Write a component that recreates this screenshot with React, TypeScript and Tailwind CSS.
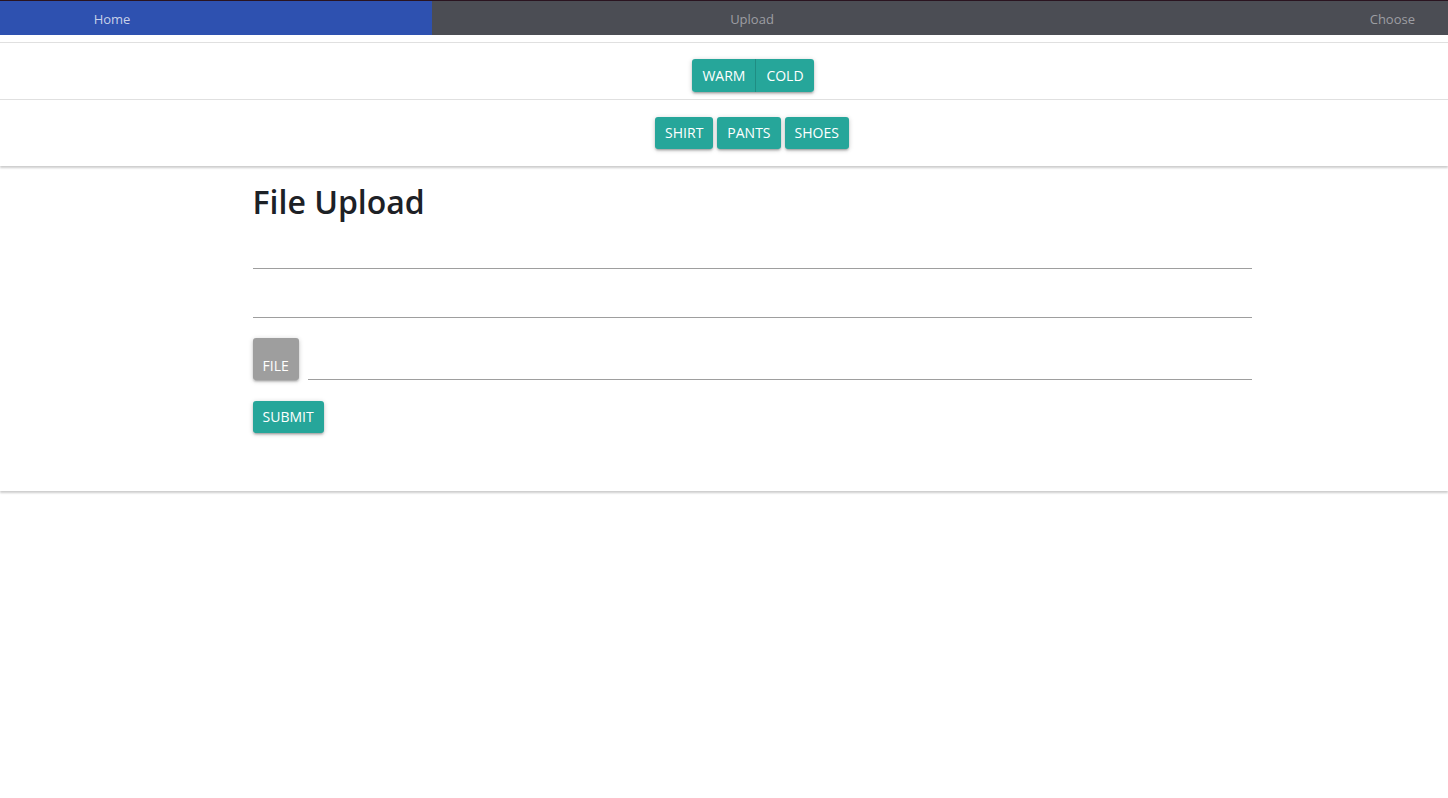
import { FC } from "react";

const tealBtn =
  "rounded-[3px] bg-[#26a69a] px-[10px] text-[14px] leading-[32px] text-white shadow-[0_2px_2px_0_rgba(0,0,0,0.14),0_3px_1px_-2px_rgba(0,0,0,0.12),0_1px_5px_0_rgba(0,0,0,0.2)]";

const UnderlineInput: FC<{ className?: string }> = ({ className }) => (
  <div className={`h-[46px] border-b border-[#9e9e9e] ${className ?? ""}`} />
);

const App: FC = () => {
  return (
    <div className="min-h-[798px] bg-white font-['Open_Sans','Noto_Sans',sans-serif] text-[#212121]">
      {/* nav */}
      <nav className="flex h-[35px] border-t border-[#2a1420] pt-[3px] text-[13px] text-[#c9c9cc]">
        <div className="-mt-[3px] flex w-[432px] items-center bg-[#2e51b0] pt-[3px]">
          <span className="w-[224px] text-center text-[#c8d0e8]">Home</span>
        </div>
        <div className="-mt-[3px] flex w-[640px] items-center justify-center bg-[#4b4d54] pt-[3px] text-[#9d9ea3]">
          Upload
        </div>
        <div className="-mt-[3px] flex flex-1 items-center justify-end bg-[#4b4d54] pt-[3px] pr-[33px] text-[#9d9ea3]">
          Choose
        </div>
      </nav>

      <div className="mt-[7px] border-t border-[#e0e0e0]" />

      {/* season toggle */}
      <div className="flex justify-center pt-[16px] pb-[7px] pl-[58px]">
        <div className="flex overflow-hidden rounded-[3px] shadow-[0_2px_2px_0_rgba(0,0,0,0.14),0_3px_1px_-2px_rgba(0,0,0,0.12),0_1px_5px_0_rgba(0,0,0,0.2)]">
          <button className="bg-[#26a69a] px-[10px] text-[14px] leading-[33px] text-white">
            WARM
          </button>
          <button className="border-l border-[#1f8d83] bg-[#26a69a] px-[10px] text-[14px] leading-[33px] text-white">
            COLD
          </button>
        </div>
      </div>

      <div className="border-t border-[#e0e0e0]" />

      {/* category */}
      <div className="flex justify-center gap-[4px] pt-[17px] pb-[17px] pl-[56px] shadow-[0_2px_2px_rgba(0,0,0,0.2)]">
        <button className={tealBtn}>SHIRT</button>
        <button className={tealBtn}>PANTS</button>
        <button className={tealBtn}>SHOES</button>
      </div>

      {/* upload form */}
      <div className="pb-[58px] pl-[56px] shadow-[0_2px_2px_rgba(0,0,0,0.2)]">
        <div className="mx-auto w-[999px] pt-[14px]">
          <h1 className="text-[32px] font-semibold leading-[44px] text-[#1d2126]">
            File Upload
          </h1>
          <UnderlineInput className="-mt-[1px]" />
          <UnderlineInput className="mt-[3px]" />
          <div className="mt-[20px] flex items-end gap-[9px]">
            <button className="h-[42px] rounded-[3px] bg-[#9e9e9e] px-[10px] pt-[12px] text-[14px] text-white shadow-[0_2px_2px_0_rgba(0,0,0,0.14),0_3px_1px_-2px_rgba(0,0,0,0.12),0_1px_5px_0_rgba(0,0,0,0.2)]">
              FILE
            </button>
            <div className="h-px flex-1 bg-[#9e9e9e]" />
          </div>
          <button className={`${tealBtn} mt-[21px]`}>SUBMIT</button>
        </div>
      </div>
    </div>
  );
};

export default App;
